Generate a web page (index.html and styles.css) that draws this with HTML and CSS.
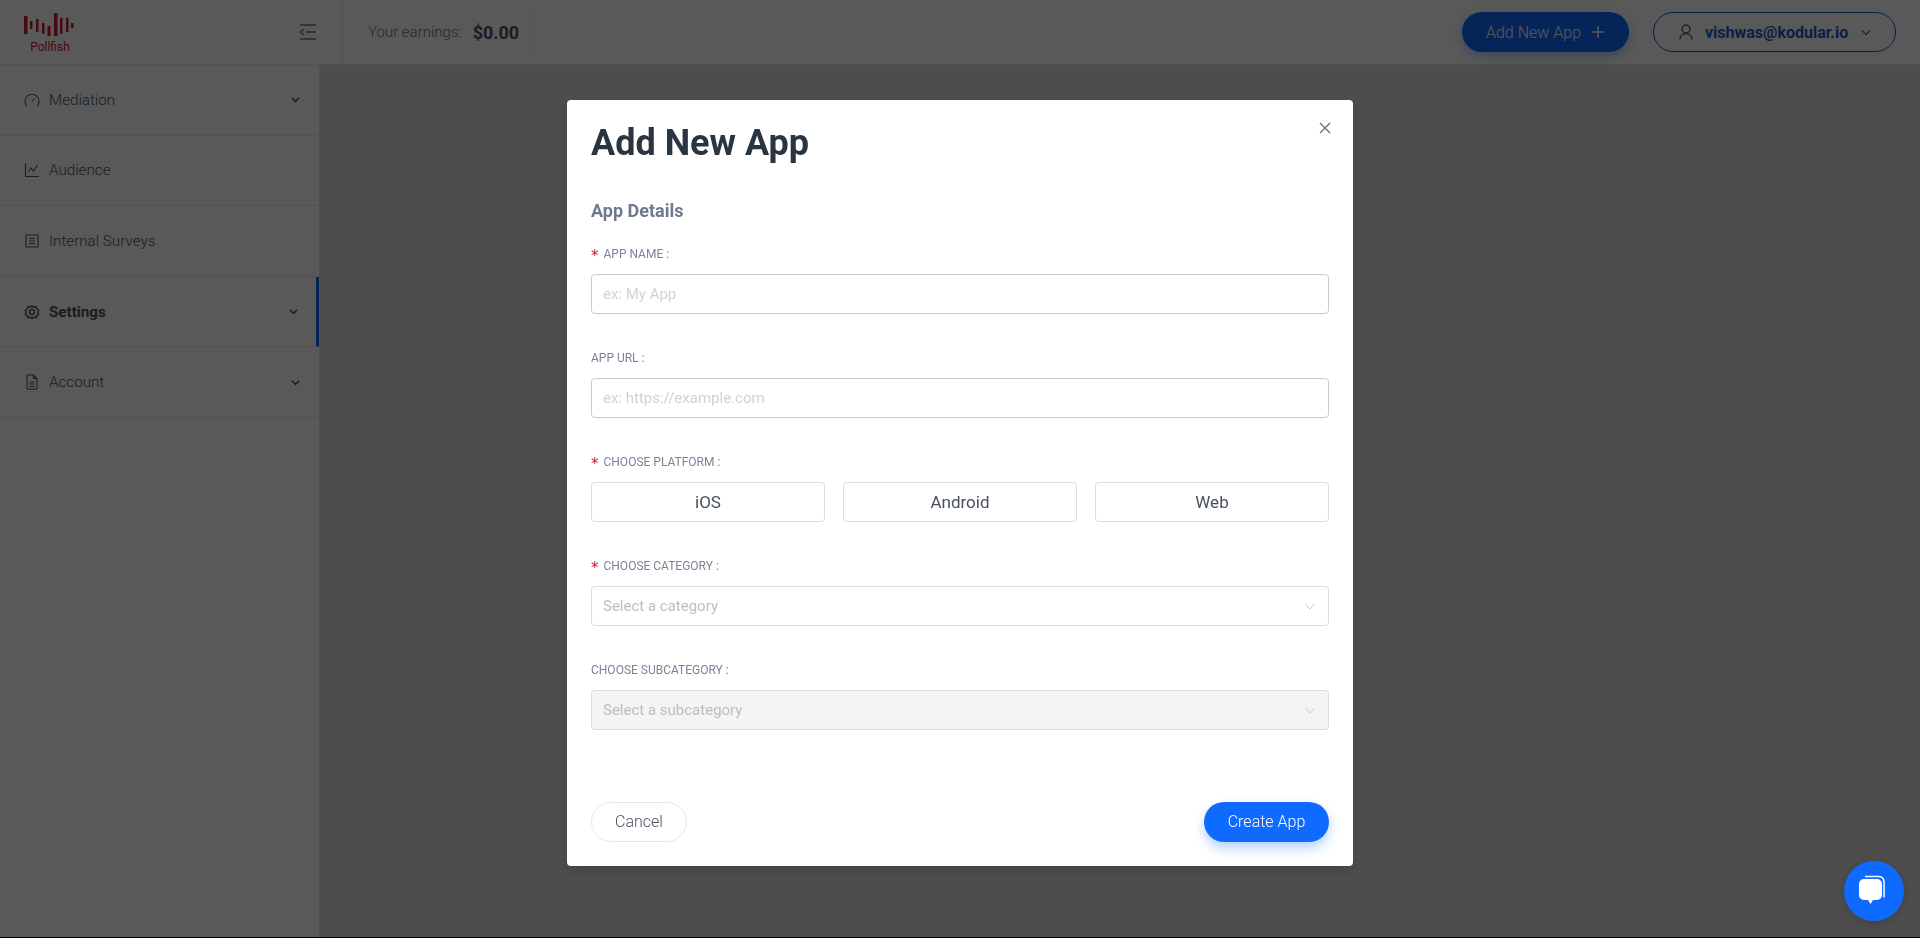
FILE: index.html
```html
<!DOCTYPE html>
<html lang="en">

<head>
    <meta charset="UTF-8">
    <meta name="viewport" content="width=device-width, initial-scale=1.0">
    <title>Add New App</title>
    <link rel="stylesheet" href="styles.css">
</head>

<body>
    <header class="topbar">
        <div class="brand-cell">
            <div class="brand">
                <svg class="brand-mark" width="52" height="24" viewBox="0 0 52 24">
                    <rect x="0" y="3" width="3.500" height="18" />
                    <rect x="6" y="8" width="2.500" height="8" />
                    <rect x="12" y="6" width="2.500" height="13" />
                    <rect x="18" y="10" width="2.500" height="11" />
                    <rect x="23.500" y="13" width="3" height="10" />
                    <rect x="30" y="0" width="3.500" height="23" />
                    <rect x="36" y="5" width="2.500" height="16" />
                    <rect x="42" y="5" width="2.500" height="14" />
                    <rect x="47" y="10" width="2.500" height="5" />
                </svg>
                <span class="brand-name">Pollfish</span>
            </div>
            <svg class="menu-toggle" width="18" height="18" viewBox="0 0 18 18">
                <path d="M1 2h16M7 9h10M1 16h16M5 6L1.500 9 5 12" />
            </svg>
        </div>
        <div class="earnings">
            <span class="earnings-label">Your earnings:</span>
            <span class="earnings-value">$0.00</span>
        </div>
        <div class="topbar-actions">
            <button class="btn-add" type="button">Add New App
                <svg width="14" height="14" viewBox="0 0 14 14"><path d="M7 1v12M1 7h12" /></svg>
            </button>
            <div class="user-pill">
                <svg class="user-icon" width="14" height="16" viewBox="0 0 14 16">
                    <circle cx="7" cy="5" r="4" />
                    <path d="M1 15.500c0-3.500 2.500-6 6-6s6 2.500 6 6" />
                </svg>
                <span class="user-email">vishwas@kodular.io</span>
                <svg class="user-chevron" width="10" height="7" viewBox="0 0 10 7"><path d="M1 1.500l4 4 4-4" /></svg>
            </div>
        </div>
    </header>

    <div class="page">
        <nav class="sidebar">
            <a class="nav-row">
                <svg class="nav-icon" width="16" height="16" viewBox="0 0 16 16">
                    <path d="M3 14.200a7 7 0 1 1 10 0M8 9.500l2.500-3" />
                </svg>
                <span class="nav-label">Mediation</span>
                <svg class="nav-chevron" width="9" height="7" viewBox="0 0 10 7"><path d="M1 1.500l4 4 4-4" /></svg>
            </a>
            <a class="nav-row">
                <svg class="nav-icon" width="16" height="16" viewBox="0 0 16 16">
                    <path d="M1.500 1v13.500H15M4 10l3-4 2.500 3L13.500 3" />
                </svg>
                <span class="nav-label">Audience</span>
            </a>
            <a class="nav-row">
                <svg class="nav-icon" width="16" height="16" viewBox="0 0 16 16">
                    <path d="M2 2h12v12H2zM5 5.500h6M5 8h6M5 10.500h6" />
                </svg>
                <span class="nav-label">Internal Surveys</span>
            </a>
            <a class="nav-row nav-row-active">
                <svg class="nav-icon" width="16" height="16" viewBox="-1 -1 18 18">
                    <path d="M8 1l2 1.500 2.500-.3 1 2.300 1.800 1.500-.5 2.500.5 2-1.800 1.500-1 2.300-2.500-.3-2 1.500-2-1.500-2.500.3-1-2.300L.7 10.500l.5-2.500-.5-2L2.500 4.500l1-2.300 2.500.3z" />
                    <circle cx="8" cy="8" r="2.700" />
                </svg>
                <span class="nav-label">Settings</span>
                <svg class="nav-chevron" width="9" height="7" viewBox="0 0 10 7"><path d="M1 1.500l4 4 4-4" /></svg>
            </a>
            <a class="nav-row">
                <svg class="nav-icon" width="16" height="16" viewBox="0 0 16 16">
                    <path d="M3 1h6.500L13 4.500V15H3zM9.500 1v3.500H13M5.500 8h5M5.500 10h5M5.500 12.500h5" />
                </svg>
                <span class="nav-label">Account</span>
                <svg class="nav-chevron" width="9" height="7" viewBox="0 0 10 7"><path d="M1 1.500l4 4 4-4" /></svg>
            </a>
        </nav>
        <main class="content"></main>
    </div>

    <!-- modal layer -->
    <div class="overlay">
        <div class="modal">
            <svg class="modal-close" width="12" height="12" viewBox="0 0 12 12"><path d="M1 1l10 10M11 1L1 11" /></svg>
            <h1 class="modal-title">Add New App</h1>
            <h2 class="section-title">App Details</h2>

            <div class="field">
                <label class="field-label required" for="appName">App name :</label>
                <input class="text-input" type="text" id="appName" placeholder="ex: My App">
            </div>

            <div class="field">
                <label class="field-label" for="appUrl">App URL :</label>
                <input class="text-input" type="text" id="appUrl" placeholder="ex: https://example.com">
            </div>

            <div class="field">
                <span class="field-label required">Choose platform :</span>
                <div class="platforms">
                    <button class="platform" type="button">iOS</button>
                    <button class="platform" type="button">Android</button>
                    <button class="platform" type="button">Web</button>
                </div>
            </div>

            <div class="field">
                <span class="field-label required">Choose category :</span>
                <div class="select">
                    <span>Select a category</span>
                    <svg width="10" height="7" viewBox="0 0 10 7"><path d="M.5 1l4.500 5 4.500-5" /></svg>
                </div>
            </div>

            <div class="field">
                <span class="field-label">Choose subcategory :</span>
                <div class="select select-disabled">
                    <span>Select a subcategory</span>
                    <svg width="10" height="7" viewBox="0 0 10 7"><path d="M.5 1l4.500 5 4.500-5" /></svg>
                </div>
            </div>

            <div class="modal-footer">
                <button class="btn-cancel" type="button">Cancel</button>
                <button class="btn-create" type="button">Create App</button>
            </div>
        </div>

        <div class="chat-button">
            <svg width="34" height="34" viewBox="0 0 34 34">
                <path class="chat-back" d="M8 2.500h14a5 5 0 0 1 5 5v16" />
                <path class="chat-front" d="M7 5h13a5 5 0 0 1 5 5v11a5 5 0 0 1-5 5h-4l-2.500 4L11 26H7a5 5 0 0 1-5-5V10a5 5 0 0 1 5-5z" />
            </svg>
        </div>
    </div>
</body>

</html>
```

FILE: styles.css
```css
* {
    box-sizing: border-box;
}

html {
    background-color: #000;
}

body {
    height: 937px;
    margin: 0;
    overflow: hidden;
    font-family: Roboto, "Liberation Sans", sans-serif;
    background-color: #dcdce0;
    color: #5b6472;
}

button {
    font-family: inherit;
    cursor: pointer;
}

/* top bar */
.topbar {
    display: flex;
    align-items: center;
    height: 65px;
    background-color: #fff;
    border-bottom: 1px solid #ececec;
}

.brand-cell {
    display: flex;
    align-items: center;
    justify-content: space-between;
    width: 343px;
    height: 64px;
    padding: 2px 25px 0 24px;
    border-right: 1px solid #ececec;
}

.brand {
    display: flex;
    flex-direction: column;
    align-items: center;
    gap: 4px;
}

.brand-mark {
    fill: #c8202f;
}

.brand-name {
    font-size: 12px;
    line-height: 13px;
    color: #c8202f;
}

.menu-toggle {
    margin-top: -2px;
    fill: none;
    stroke: #6e7681;
    stroke-width: 1.5;
}

.earnings {
    display: flex;
    align-items: center;
    gap: 11px;
    height: 40px;
    margin-left: 25px;
    padding-right: 10px;
    border-right: 1px solid #f4f4f4;
}

.earnings-label {
    font-size: 15px;
    font-weight: 300;
    color: #6b7280;
}

.earnings-value {
    font-size: 18px;
    font-weight: 700;
    color: #4c5560;
}

.topbar-actions {
    display: flex;
    align-items: center;
    gap: 24px;
    margin-left: auto;
    margin-right: 24px;
}

.btn-add {
    display: flex;
    align-items: center;
    justify-content: center;
    gap: 10px;
    width: 167px;
    height: 40px;
    padding: 0;
    border: none;
    border-radius: 20px;
    background-color: #0f6bff;
    box-shadow: 0 4px 12px rgba(15, 107, 255, 0.35);
    color: #fff;
    font-size: 16px;
    font-weight: 300;
}

.btn-add svg {
    fill: none;
    stroke: #fff;
    stroke-width: 1.5;
}

.user-pill {
    display: flex;
    align-items: center;
    width: 243px;
    height: 40px;
    padding: 0 24px 0 25px;
    border: 1px solid #0f5bd0;
    border-radius: 20px;
}

.user-icon {
    fill: none;
    stroke: #5b6472;
    stroke-width: 1.5;
}

.user-email {
    margin-left: 12px;
    font-size: 16px;
    font-weight: 700;
    color: #1a5ad0;
}

.user-chevron {
    margin-left: auto;
    fill: none;
    stroke: #5b6472;
    stroke-width: 1.2;
}

/* sidebar */
.page {
    display: flex;
    height: 872px;
}

.sidebar {
    width: 320px;
    background-color: #fff;
    border-right: 1px solid #e6e6e6;
}

.nav-row {
    display: flex;
    align-items: center;
    height: 70.6px;
    padding: 0 19px 0 24px;
    border-bottom: 1px solid #ececec;
    font-size: 15.2px;
    font-weight: 300;
    color: #4c5560;
}

.nav-icon {
    flex: none;
    fill: none;
    stroke: #4c5560;
    stroke-width: 1.1;
}

.nav-label {
    margin-left: 9px;
}

.nav-chevron {
    margin-left: auto;
    fill: none;
    stroke: #4c5560;
    stroke-width: 1.8;
}

.nav-row-active {
    padding-right: 18px;
    border-right: 3px solid #0f6bff;
    font-weight: 700;
}

.nav-row-active .nav-icon {
    stroke-width: 1.7;
}

.content {
    flex: 1;
}

/* modal */
.overlay {
    position: fixed;
    top: 0;
    left: 0;
    width: 100%;
    height: 937px;
    padding-top: 100px;
    background-color: rgba(0, 0, 0, 0.65);
}

.modal {
    position: relative;
    width: 786px;
    height: 766px;
    margin-left: 567px;
    padding: 21px 24px 24px;
    border-radius: 4px;
    background-color: #fff;
    box-shadow: 0 4px 12px rgba(0, 0, 0, 0.15);
}

.modal-close {
    position: absolute;
    top: 21.5px;
    right: 22px;
    fill: none;
    stroke: #6a7380;
    stroke-width: 1.4;
}

.modal-title {
    margin: 0 0 34px;
    font-size: 36px;
    font-weight: 700;
    line-height: 44px;
    color: #2a3542;
}

.section-title {
    margin: 0 0 20px;
    font-size: 18px;
    font-weight: 700;
    line-height: 24px;
    color: #6f7a91;
}

.field {
    margin-bottom: 33px;
}

.field-label {
    display: block;
    height: 21px;
    margin-bottom: 10px;
    padding-top: 1px;
    font-size: 12px;
    line-height: 20px;
    text-transform: uppercase;
    color: #7b8398;
}

.required::before {
    content: "*";
    margin-right: 5px;
    font-family: "DejaVu Sans", sans-serif;
    font-size: 15px;
    line-height: 0;
    vertical-align: -3px;
    color: #d0122f;
}

.text-input {
    display: block;
    width: 100%;
    height: 40px;
    padding: 0 11px;
    border: 1.5px solid #c8c9d3;
    border-radius: 4px;
    outline: none;
    font-family: inherit;
    font-size: 15px;
}

.text-input::placeholder {
    color: #d2d2d2;
}

.platforms {
    display: flex;
    gap: 18px;
}

.platform {
    flex: 1;
    height: 40px;
    padding: 0;
    border: 1.5px solid #dcdcdf;
    border-radius: 4px;
    background-color: #fff;
    font-size: 17px;
    color: #47505c;
}

.select {
    display: flex;
    align-items: center;
    justify-content: space-between;
    height: 40px;
    padding: 0 13px 0 11px;
    border: 1.5px solid #dcdcdc;
    border-radius: 4px;
    font-size: 15px;
    color: #bdbdbd;
}

.select svg {
    fill: none;
    stroke: #c9c9c9;
    stroke-width: 1;
}

.select-disabled {
    background-color: #f4f4f4;
}

.modal-footer {
    display: flex;
    justify-content: space-between;
    margin-top: 72px;
}

.btn-cancel {
    width: 96px;
    height: 40px;
    padding: 0 0 2px;
    border: 1px solid #e8e8e8;
    border-radius: 20px;
    background-color: #fff;
    font-size: 16px;
    font-weight: 300;
    color: #47505c;
}

.btn-create {
    width: 125px;
    height: 40px;
    padding: 0 0 2px;
    border: none;
    border-radius: 20px;
    background-color: #0f6bff;
    box-shadow: 0 6px 12px rgba(15, 107, 255, 0.3);
    font-size: 16px;
    font-weight: 300;
    color: #fff;
}

.chat-button {
    position: absolute;
    top: 861px;
    left: 1844px;
    display: flex;
    align-items: center;
    justify-content: center;
    width: 60px;
    height: 60px;
    border-radius: 50%;
    background-color: #0f6bff;
    box-shadow: 0 2px 8px rgba(0, 0, 0, 0.2);
}

.chat-back {
    fill: none;
    stroke: #fff;
    stroke-width: 1.5;
}

.chat-front {
    fill: #fff;
}
```
